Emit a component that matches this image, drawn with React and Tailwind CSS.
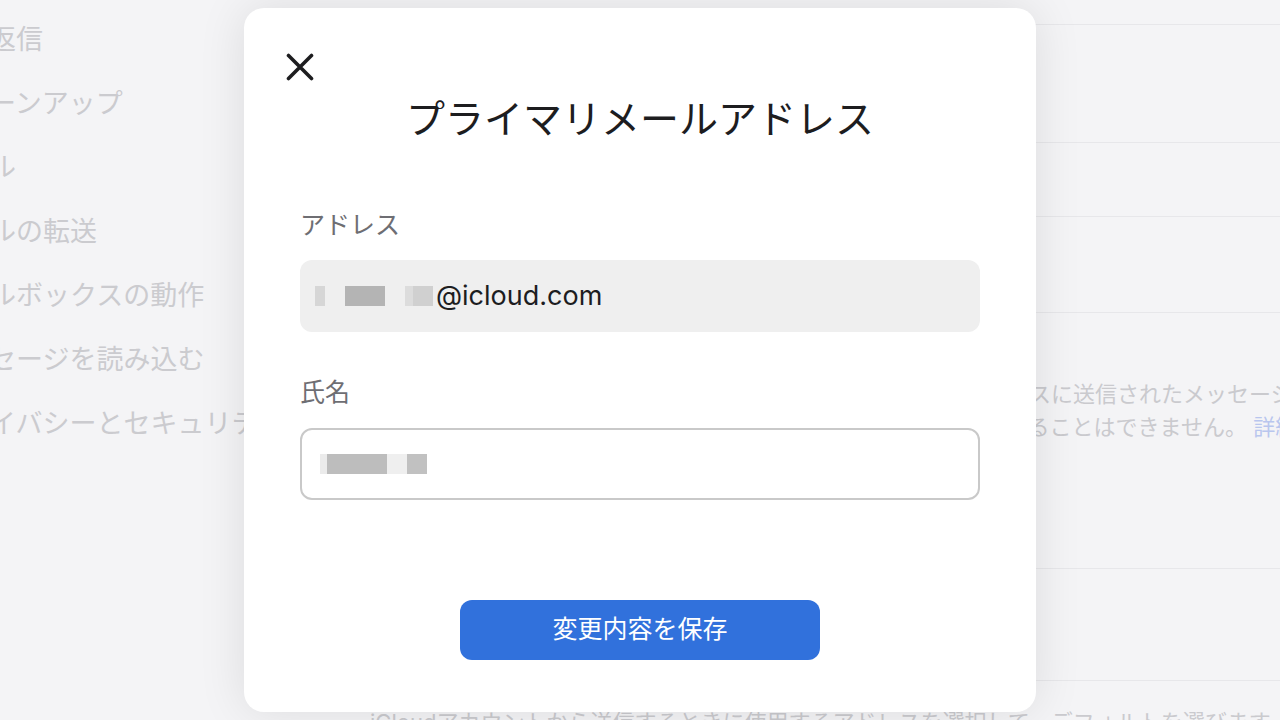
import { useState } from "react";

const sidebarItems = [
  "自動返信",
  "クリーンアップ",
  "ルール",
  "メールの転送",
  "メールボックスの動作",
  "メッセージを読み込む",
  "プライバシーとセキュリティ",
];

function CloseIcon() {
  return (
    <svg width="28" height="28" viewBox="0 0 28 28" fill="none">
      <path
        d="M2.5 2.5L25.5 25.5M25.5 2.5L2.5 25.5"
        stroke="#1d1d1f"
        strokeWidth="3.6"
        strokeLinecap="round"
      />
    </svg>
  );
}

export default function App() {
  const [name, setName] = useState("");

  return (
    <div className="relative h-[720px] w-full overflow-hidden bg-[#f4f4f6] font-['Inter','Noto_Sans_CJK_JP',sans-serif]">
      {/* Background settings page */}
      <div className="flex h-full">
        <div className="w-[370px] shrink-0 overflow-hidden pt-[8px]">
          <ul className="-ml-[65px]">
            {sidebarItems.map((item) => (
              <li
                key={item}
                className="flex h-[64px] items-center whitespace-nowrap text-[27px] text-[#cbcbcf]"
              >
                {item}
              </li>
            ))}
          </ul>
        </div>

        <div className="flex min-w-0 flex-1 flex-col text-[22px] text-[#cacace]">
          <div className="h-[25px] shrink-0 border-b border-[#e7e7ea]" />
          <div className="h-[118px] shrink-0 border-b border-[#e7e7ea]" />
          <div className="h-[74px] shrink-0 border-b border-[#e7e7ea]" />
          <div className="h-[96px] shrink-0 border-b border-[#e7e7ea]" />
          <div className="h-[256px] shrink-0 border-b border-[#e7e7ea] pt-[65px] leading-[33px]">
            <p className="whitespace-nowrap">
              このメールエイリアスを削除すると、以後このエイリアスのアドレスに送信されたメッセージを受け取れません
            </p>
            <p className="whitespace-nowrap">
              セージを受信したり、このアドレスを使ってメールを送信したりすることはできません。{" "}
              <span className="text-[#b9c6ee]">詳細</span>
            </p>
          </div>
          <div className="h-[112px] shrink-0 border-b border-[#e7e7ea]" />
          <p className="shrink-0 whitespace-nowrap pt-[25px] leading-[33px]">
            iCloudアカウントから送信するときに使用するアドレスを選択して、デフォルトを選びます。
          </p>
        </div>
      </div>

      {/* Modal */}
      <div className="absolute inset-0 flex items-center justify-center">
        <div className="flex h-[704px] w-[792px] flex-col rounded-[20px] bg-white px-[56px] shadow-[0_0_48px_rgba(0,0,0,0.10)]">
          <div className="pt-[45px]">
            <button className="-ml-[14px] block h-[28px] w-[28px]">
              <CloseIcon />
            </button>
          </div>
          <h1 className="mt-[14px] text-center text-[39px] font-normal leading-[47px] text-[#1d1d1f]">
            プライマリメールアドレス
          </h1>

          <label className="mt-[68px] block text-[25px] leading-[30px] text-[#6e6e73]">
            アドレス
          </label>
          <div className="mt-[20px] flex h-[72px] items-center rounded-[12px] bg-[#efefef] pl-[15px]">
            <span className="h-[20px] w-[10px] bg-[#d6d6d6]" />
            <span className="ml-[20px] h-[20px] w-[40px] bg-[#b4b4b4]" />
            <span className="ml-[20px] h-[20px] w-[8px] bg-[#dcdcdc]" />
            <span className="h-[20px] w-[20px] bg-[#d0d0d0]" />
            <span className="ml-[3px] text-[27px] text-[#1d1d1f]">@icloud.com</span>
          </div>

          <label className="mt-[45px] block text-[25px] leading-[30px] text-[#6e6e73]">
            氏名
          </label>
          <div className="mt-[21px] flex h-[72px] items-center rounded-[12px] border-2 border-[#c9c9c9] bg-white pl-[18px]">
            <span className="h-[20px] w-[7px] bg-[#ebebeb]" />
            <span className="h-[20px] w-[60px] bg-[#bdbdbd]" />
            <span className="h-[20px] w-[20px] bg-[#efefef]" />
            <span className="h-[20px] w-[20px] bg-[#c1c1c1]" />
            <input
              value={name}
              onChange={(e) => setName(e.target.value)}
              className="ml-2 flex-1 bg-transparent text-[26px] outline-none"
            />
          </div>

          <div className="mt-[100px] flex justify-center">
            <button className="h-[60px] w-[360px] rounded-[12px] bg-[#3171dc] text-[25px] text-white">
              変更内容を保存
            </button>
          </div>
        </div>
      </div>
    </div>
  );
}
